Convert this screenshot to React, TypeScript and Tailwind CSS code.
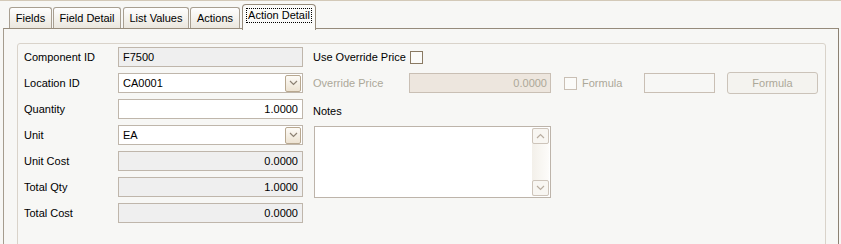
import type { ReactNode } from 'react';

const font = { fontFamily: '"Liberation Sans", Arial, sans-serif' };

function Chevron({ up = false, color = '#8c8173' }: { up?: boolean; color?: string }) {
  return (
    <svg width="9" height="6" viewBox="0 0 9 6">
      <path d={up ? 'M1 5 L4.5 1.5 L8 5' : 'M1 1 L4.5 4.5 L8 1'} fill="none" stroke={color} strokeWidth="1.2" />
    </svg>
  );
}

function Box({ children, gray, right, combo }: { children?: ReactNode; gray?: boolean; right?: boolean; combo?: boolean }) {
  return (
    <div
      className={`flex h-[20px] w-[185px] items-center border border-[#bfb6ab] ${gray ? 'bg-[#efefef]' : 'bg-white'} ${right ? 'justify-end pr-[4px]' : 'pl-[4px]'}`}
    >
      <span className="flex-1 truncate" style={{ textAlign: right ? 'right' : 'left' }}>{children}</span>
      {combo && (
        <div className="mr-[1px] flex h-[17px] w-[16px] items-center justify-center rounded-[2px] border border-[#b8a890] bg-gradient-to-b from-[#fdfbf7] to-[#ede3d2]">
          <Chevron />
        </div>
      )}
    </div>
  );
}

function Tab({ label, w, active, ml }: { label: string; w: number; active?: boolean; ml: number }) {
  if (active) {
    return (
      <div
        className="relative z-10 mt-[3px] flex h-[26px] shrink-0 items-start justify-center rounded-t-[4px] border border-b-0 border-[#968b7b] bg-[#fbfbf9] pt-[4px]"
        style={{ width: w, marginLeft: ml }}
      >
        <span className="px-[1px] leading-[13px] outline-1 outline-dotted outline-black">{label}</span>
      </div>
    );
  }
  return (
    <div
      className="mt-[6px] flex h-[21px] shrink-0 items-center justify-center rounded-t-[3px] border border-b-0 border-[#a89f91] bg-gradient-to-b from-[#fefefe] to-[#ebe7de]"
      style={{ width: w, marginLeft: ml }}
    >
      {label}
    </div>
  );
}

export default function App() {
  const rows: { label: string; value: string; gray?: boolean; right?: boolean; combo?: boolean }[] = [
    { label: 'Component ID', value: 'F7500', gray: true },
    { label: 'Location ID', value: 'CA0001', combo: true },
    { label: 'Quantity', value: '1.0000', right: true },
    { label: 'Unit', value: 'EA', combo: true },
    { label: 'Unit Cost', value: '0.0000', gray: true, right: true },
    { label: 'Total Qty', value: '1.0000', gray: true, right: true },
    { label: 'Total Cost', value: '0.0000', gray: true, right: true },
  ];

  return (
    <div className="h-[244px] w-[841px] overflow-hidden border-t border-[#d3c9b8] bg-[#f7f7f5] text-[11px] text-black" style={font}>
      <div className="flex h-[27px] items-start">
        <Tab label="Fields" w={43} ml={9} />
        <Tab label="Field Detail" w={68} ml={1} />
        <Tab label="List Values" w={66} ml={2} />
        <Tab label="Actions" w={50} ml={1} />
        <Tab label="Action Detail" w={74} ml={2} active />
      </div>
      <div className="ml-[3px] mr-[2px] h-[230px] border border-l-[#a59c8e] border-t-[#968b7b] border-r-[#8c8172] border-b-[#8c8172] bg-[#f7f7f5] pl-[13px] pr-[12px] pt-[14px]">
        <div className="flex h-[220px] rounded-[3px] border border-[#d9d3ca] pl-[6px] pt-[3px]">
          <div className="flex flex-col gap-[6px]">
            {rows.map((r) => (
              <div key={r.label} className="flex h-[20px] items-center">
                <div className="w-[94px]">{r.label}</div>
                <Box gray={r.gray} right={r.right} combo={r.combo}>{r.value}</Box>
              </div>
            ))}
          </div>
          <div className="ml-[10px] flex flex-col">
            <div className="flex h-[20px] items-center">
              <div className="w-[97px]">Use Override Price</div>
              <div className="h-[13px] w-[13px] border border-[#8a7a63] bg-[#fbfbf9]" />
            </div>
            <div className="mt-[6px] flex h-[20px] items-center text-[#aca899]">
              <div className="w-[96px]">Override Price</div>
              <div className="flex h-[20px] w-[142px] items-center justify-end border border-[#c9bfb4] bg-[#ede6de] pr-[3px]">0.0000</div>
              <div className="ml-[13px] h-[13px] w-[13px] border border-[#c9bfb4] bg-[#fbfbf9]" />
              <div className="ml-[5px] w-[62px]">Formula</div>
              <div className="h-[20px] w-[71px] border border-[#c9bfb4] bg-[#f7f7f5]" />
              <div className="ml-[12px] flex h-[22px] w-[91px] items-center justify-center rounded-[3px] border border-[#cbc3b9] bg-[#f4f3ef]">
                Formula
              </div>
            </div>
            <div className="mt-[6px] flex h-[20px] items-center pt-[4px]">Notes</div>
            <div className="ml-[1px] mt-[7px] flex h-[72px] w-[237px] justify-end border border-[#bdb4aa] bg-white p-[1px]">
              <div className="flex w-[17px] flex-col justify-between bg-gradient-to-r from-[#f3f0ea] to-[#fdfcfa]">
                <div className="flex h-[16px] items-center justify-center rounded-[2px] border border-[#cdc4ba] bg-[#f8f6f2]">
                  <Chevron up color="#b8ada0" />
                </div>
                <div className="flex h-[16px] items-center justify-center rounded-[2px] border border-[#cdc4ba] bg-[#f8f6f2]">
                  <Chevron color="#b8ada0" />
                </div>
              </div>
            </div>
          </div>
        </div>
      </div>
    </div>
  );
}
